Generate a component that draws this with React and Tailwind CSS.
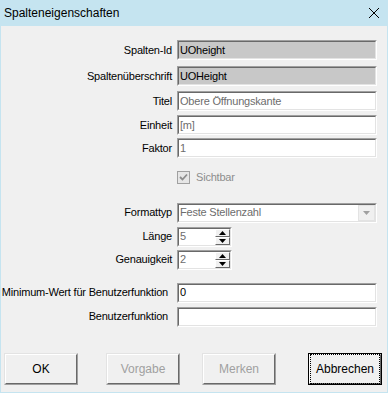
const font = { fontFamily: '"Liberation Sans", Arial, sans-serif' };

function Sunken({ className = "", children }) {
  return (
    <div
      className={`border border-t-[#a0a0a0] border-l-[#a0a0a0] border-b-white border-r-white ${className}`}
    >
      <div className="h-full w-full border border-t-[#696969] border-l-[#696969] border-b-[#e3e3e3] border-r-[#e3e3e3] flex items-center">
        {children}
      </div>
    </div>
  );
}

function Field({ value, readOnly, muted }) {
  return (
    <Sunken className={`h-[20px] w-[200px] ${readOnly ? "bg-[#c8c8c8]" : "bg-white"}`}>
      <span className={`pl-[1px] text-[11px] tracking-[-0.2px] leading-none ${muted ? "text-[#6d6d6d]" : "text-black"}`}>
        {value}
      </span>
    </Sunken>
  );
}

function Row({ label, children, className = "" }) {
  return (
    <div className={`flex items-center ${className}`}>
      <div className="w-[176px] pr-[5px] text-right text-[11px] tracking-[-0.2px] text-black">{label}</div>
      {children}
    </div>
  );
}

function SpinArrow({ up }) {
  return (
    <div className="flex-1 flex items-center justify-center bg-[#f0f0f0] border border-t-white border-l-white border-b-[#696969] border-r-[#696969]">
      <svg width="7" height="4" viewBox="0 0 7 4">
        {up ? <path d="M0 4 L3.5 0 L7 4 Z" fill="#000" /> : <path d="M0 0 L3.5 4 L7 0 Z" fill="#000" />}
      </svg>
    </div>
  );
}

function Spin({ value }) {
  return (
    <Sunken className="h-[20px] w-[55px] bg-white">
      <span className="pl-[1px] flex-1 text-[11px] leading-none text-[#6d6d6d]">{value}</span>
      <div className="h-full w-[15px] flex flex-col">
        <SpinArrow up />
        <SpinArrow />
      </div>
    </Sunken>
  );
}

function Button({ label, disabled, isDefault }) {
  return (
    <div
      className={`h-[32px] w-[74px] ${
        isDefault
          ? "border border-black"
          : "border border-t-[#e3e3e3] border-l-[#e3e3e3] border-b-[#a0a0a0] border-r-[#a0a0a0]"
      }`}
    >
      <div className="h-full w-full flex items-center justify-center bg-[#f0f0f0] border border-t-white border-l-white border-b-[#696969] border-r-[#696969]">
        <span
          className={`text-[12px] ${disabled ? "text-[#a0a0a0]" : "text-black"} ${
            isDefault ? "border border-dotted border-black px-[5px] py-[5px]" : ""
          }`}
        >
          {label}
        </span>
      </div>
    </div>
  );
}

export default function App() {
  return (
    <div className="w-[388px] h-[393px] bg-[#c5e4f0] flex flex-col" style={font}>
      <div className="h-[26px] flex items-center justify-between pl-[4px] pr-[8px]">
        <span className="text-[12px] text-black">Spalteneigenschaften</span>
        <svg width="12" height="12" viewBox="0 0 12 12">
          <path d="M1 1 L11 11 M11 1 L1 11" stroke="#000" strokeWidth="1" />
        </svg>
      </div>
      <div className="flex-1 mx-[1px] mb-[1px] bg-[#f0f0f0] flex flex-col">
        <Row label="Spalten-Id" className="mt-[14px]">
          <Field value="UOheight" readOnly />
        </Row>
        <Row label="Spaltenüberschrift" className="mt-[6px]">
          <Field value="UOHeight" readOnly />
        </Row>
        <Row label="Titel" className="mt-[5px]">
          <Field value="Obere Öffnungskante" muted />
        </Row>
        <Row label="Einheit" className="mt-[4px]">
          <Field value="[m]" muted />
        </Row>
        <Row label="Faktor" className="mt-[3px]">
          <Field value="1" muted />
        </Row>
        <div className="mt-[11px] pl-[176px] flex items-center gap-[6px]">
          <div className="w-[13px] h-[13px] border border-[#a0a0a0] bg-[#e6e6e6] flex items-center justify-center">
            <svg width="9" height="9" viewBox="0 0 9 9">
              <path d="M1 4 L3.5 6.5 L8 1.5" stroke="#8d8d8d" strokeWidth="1.8" fill="none" />
            </svg>
          </div>
          <span className="text-[11px] tracking-[-0.2px] text-[#8d8d8d]">Sichtbar</span>
        </div>
        <Row label="Formattyp" className="mt-[17px]">
          <Sunken className="h-[20px] w-[200px] bg-white">
            <span className="pl-[1px] flex-1 text-[11px] tracking-[-0.2px] leading-none text-[#6d6d6d]">
              Feste Stellenzahl
            </span>
            <div className="h-full w-[17px] flex items-center justify-center bg-[#f0f0f0] border border-[#e3e3e3]">
              <svg width="7" height="4" viewBox="0 0 7 4">
                <path d="M0 0 L3.5 4 L7 0 Z" fill="#a0a0a0" />
              </svg>
            </div>
          </Sunken>
        </Row>
        <Row label="Länge" className="mt-[4px]">
          <Spin value="5" />
        </Row>
        <Row label="Genauigkeit" className="mt-[3px]">
          <Spin value="2" />
        </Row>
        <div className="mt-[13px] flex items-center">
          <div className="w-[176px] pr-[9px] text-right text-[11px] tracking-[-0.2px] text-black whitespace-nowrap">
            Minimum-Wert für Benutzerfunktion
          </div>
          <Field value="0" />
        </div>
        <div className="mt-[4px] flex items-center">
          <div className="w-[176px] pr-[9px] text-right text-[11px] tracking-[-0.2px] text-black">
            Benutzerfunktion
          </div>
          <Field value="" />
        </div>
        <div className="mt-auto mb-[7px] flex items-center pl-[3px] pr-[5px]">
          <Button label="OK" />
          <div className="ml-[28px]">
            <Button label="Vorgabe" disabled />
          </div>
          <div className="ml-[22px]">
            <Button label="Merken" disabled />
          </div>
          <div className="ml-auto">
            <Button label="Abbrechen" isDefault />
          </div>
        </div>
      </div>
    </div>
  );
}
